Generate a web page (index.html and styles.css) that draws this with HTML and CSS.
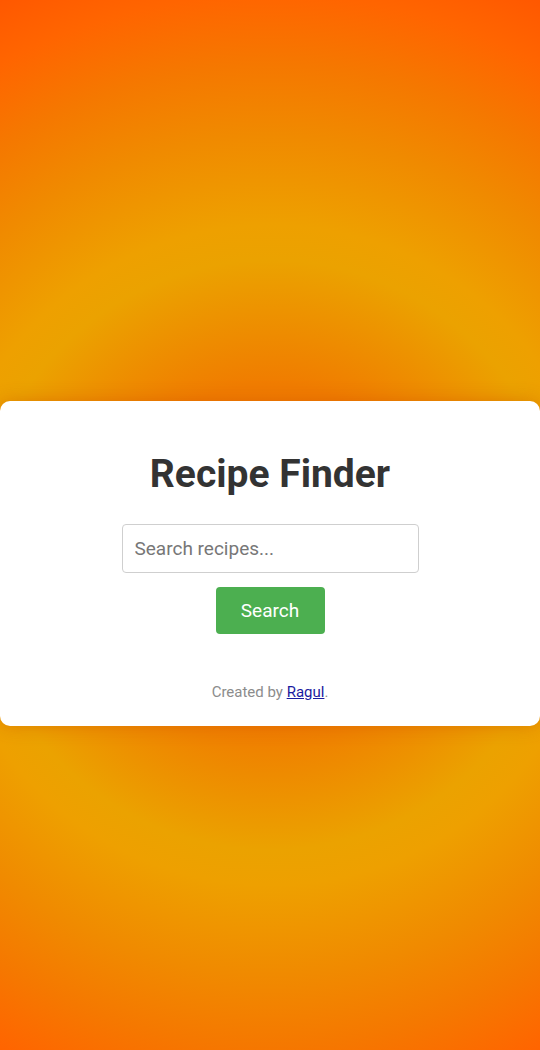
FILE: index.html
```html
<!DOCTYPE html>
<html lang="en">
<head>
<meta charset="utf-8">
<title>Recipe Finder</title>
<link rel="stylesheet" href="styles.css">
</head>
<body>
<main class="page">
  <section class="card">
    <h1 class="title">Recipe Finder</h1>
    <form class="search" onsubmit="return false">
      <input class="search-input" type="text" placeholder="Search recipes...">
      <button class="search-btn" type="submit">Search</button>
    </form>
    <p class="credit">Created by <a class="credit-link" href="#">Ragul</a>.</p>
  </section>
</main>
</body>
</html>
```
FILE: styles.css
```css
* { box-sizing: border-box; }
html, body { margin: 0; padding: 0; }
body {
  font-family: Roboto, "Liberation Sans", Arial, sans-serif;
  min-height: 1050px;
  background: radial-gradient(circle at 50% 555px,
    #ef7200 0px, #f07c00 170px, #eba200 295px, #eea000 330px, #f08a00 420px,
    #f57800 490px, #ff6500 560px, #ff5500 630px);
}
.page {
  min-height: 1050px;
  display: flex;
  flex-direction: column;
  justify-content: flex-start;
  padding-top: 401px;
}
.card {
  background: #fff;
  border-radius: 10px;
  padding: 50px 20px 24px;
  display: flex;
  flex-direction: column;
  align-items: center;
  box-shadow: 0 0 18px rgba(205, 85, 0, 0.45);
}
.title {
  margin: 0;
  font-size: 39px;
  line-height: 47px;
  font-weight: 700;
  color: #333;
}
.search {
  margin-top: 26px;
  display: flex;
  flex-direction: column;
  align-items: center;
  gap: 14px;
}
.search-input {
  width: 297px;
  height: 49px;
  border: 1px solid #cfcfcf;
  border-radius: 4px;
  padding: 0 12px;
  font-family: inherit;
  font-size: 19px;
  color: #333;
  outline: none;
}
.search-input::placeholder { color: #777; }
.search-btn {
  width: 109px;
  height: 47px;
  border: none;
  border-radius: 4px;
  background: #4caf50;
  color: #fff;
  font-family: inherit;
  font-size: 19px;
  cursor: pointer;
}
.credit {
  margin: 48px 0 0;
  font-size: 15px;
  line-height: 20px;
  color: #8c8c8c;
}
.credit-link { color: #1a1aa0; }
```
